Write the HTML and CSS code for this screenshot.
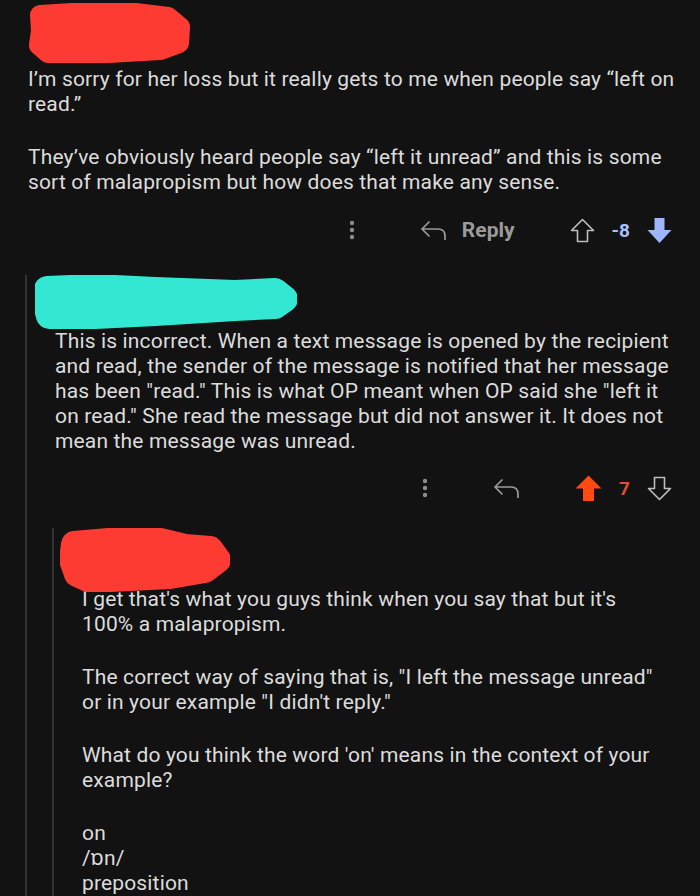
FILE: index.html
```html
<!doctype html>
<html lang="en">
<head>
    <meta charset="UTF-8">
    <meta name="viewport" content="width=device-width, initial-scale=1.0">
    <link rel="stylesheet" href="styles.css">
    <title>Comments</title>
</head>
<body>
<main class="thread">
    <article class="comment">
        <svg class="blob blob-op" width="162" height="60" viewBox="0 0 162 60" aria-hidden="true">
            <polygon points="12,12 60,9 100,9 140,14 152,24 151,40 132,47 80,50 20,50 11,42 13,28"/>
        </svg>
        <div class="body">
            <p>I’m sorry for her loss but it really gets to me when people say “left on read.”</p>
            <p>They’ve obviously heard people say “left it unread” and this is some sort of malapropism but how does that make any sense.</p>
        </div>
        <div class="actions">
            <button class="more" aria-label="More">
                <svg width="6" height="20" viewBox="0 0 6 20"><circle cx="3" cy="3" r="2.2"/><circle cx="3" cy="10" r="2.2"/><circle cx="3" cy="17" r="2.2"/></svg>
            </button>
            <button class="reply">
                <svg width="27" height="20" viewBox="0 0 27 20"><path d="M9 2 L2 9 L9 16 M2 9 H18 Q25 9 25 16 V20"/></svg>
                <span>Reply</span>
            </button>
            <div class="vote">
                <svg class="arrow" width="25" height="25" viewBox="0 0 25 25"><path d="M12.5 1.5 L23.5 12.5 H17.5 V23.5 H7.5 V12.5 H1.5 Z"/></svg>
                <span class="score down-voted">-8</span>
                <svg class="arrow filled-blue" width="25" height="27" viewBox="0 0 25 27"><path d="M7.5 1 H17.5 V13 H24.5 L12.5 26 L0.5 13 H7.5 Z"/></svg>
            </div>
        </div>

        <div class="replies">
            <article class="comment">
                <svg class="blob blob-teal" width="262" height="55" viewBox="0 0 262 55" aria-hidden="true">
                    <polygon points="12,14 60,12 120,15 200,18 240,16 250,24 240,31 200,33 120,38 60,41 14,41 10,26"/>
                </svg>
                <div class="body">
                    <p>This is incorrect. When a text message is opened by the recipient and read, the sender of the message is notified that her message has been "read." This is what OP meant when OP said she "left it on read." She read the message but did not answer it. It does not mean the message was unread.</p>
                </div>
                <div class="actions">
                    <button class="more" aria-label="More">
                        <svg width="6" height="20" viewBox="0 0 6 20"><circle cx="3" cy="3" r="2.2"/><circle cx="3" cy="10" r="2.2"/><circle cx="3" cy="17" r="2.2"/></svg>
                    </button>
                    <button class="reply" aria-label="Reply">
                        <svg width="27" height="20" viewBox="0 0 27 20"><path d="M9 2 L2 9 L9 16 M2 9 H18 Q25 9 25 16 V20"/></svg>
                    </button>
                    <div class="vote">
                        <svg class="arrow filled-orange" width="27" height="27" viewBox="0 0 27 27"><path d="M13.5 0.5 L26.5 13.5 H19 V26 H8 V13.5 H0.5 Z"/></svg>
                        <span class="score up-voted">7</span>
                        <svg class="arrow" width="25" height="25" viewBox="0 0 25 25"><path d="M7.5 1.5 H17.5 V12.5 H23.5 L12.5 23.5 L1.5 12.5 H7.5 Z"/></svg>
                    </div>
                </div>

                <div class="replies">
                    <article class="comment">
                        <svg class="blob blob-red" width="170" height="64" viewBox="0 0 170 64" aria-hidden="true">
                            <polygon points="14,16 60,12 100,13 125,19 150,21 158,32 145,42 110,48 70,50 30,52 17,46 12,32"/>
                        </svg>
                        <div class="body narrow">
                            <p>I get that's what you guys think when you say that but it's 100% a malapropism.</p>
                            <p>The correct way of saying that is, "I left the message unread" or in your example "I didn't reply."</p>
                            <p>What do you think the word 'on' means in the context of your example?</p>
                            <p>on<br>/ɒn/<br>preposition</p>
                        </div>
                    </article>
                </div>
            </article>
        </div>
    </article>
</main>
</body>
</html>
```

FILE: styles.css
```css
* {
    box-sizing: border-box;
}

html {
    height: 100%;
    background: #121212;
}

body {
    margin: 0;
    min-height: 100%;
    overflow: hidden;
    background: #121212;
    color: #dcdcdc;
    font-family: Roboto, 'Noto Sans', sans-serif;
    font-size: 21px;
    letter-spacing: 0.15px;
    line-height: 25px;
}

.thread {
    padding: 3px 22px 0 25px;
}

.comment > .body,
.comment > .actions {
    margin-left: 3px;
}

.body.narrow {
    padding-right: 18px;
}

.body p {
    margin: 0 0 28px;
}

.body p:last-child {
    margin-bottom: 0;
}

/* redaction scribbles drawn over the user names */
.blob {
    display: block;
    position: relative;
    z-index: 1;
    stroke-linejoin: round;
}

.blob-op {
    fill: #fe3b33;
    stroke: #fe3b33;
    stroke-width: 20;
    margin: 0 0 4px 3px;
}

.blob-teal {
    fill: #33e8d3;
    stroke: #33e8d3;
    stroke-width: 26;
    margin: -2px 0 -1px -17px;
}

.blob-red {
    fill: #fe3b33;
    stroke: #fe3b33;
    stroke-width: 26;
    margin: -8px 0 -5px -19px;
}

.actions {
    display: flex;
    justify-content: flex-end;
    align-items: center;
    height: 36px;
    margin-top: 17px;
    padding-right: 6px;
    letter-spacing: 0;
}

.replies .actions {
    margin-top: 16px;
}

button {
    display: flex;
    align-items: center;
    padding: 0;
    border: 0;
    background: none;
    font: inherit;
    color: inherit;
}

.more {
    margin-right: 65px;
    fill: #8c8c8c;
}

.reply {
    gap: 15px;
    margin-right: 55px;
    color: #9b9b9b;
    font-size: 21px;
    font-weight: 700;
}

.reply svg {
    fill: none;
    stroke: #9b9b9b;
    stroke-width: 1.7;
    stroke-linecap: round;
    stroke-linejoin: round;
}

.vote {
    display: flex;
    align-items: center;
    gap: 17px;
}

.arrow {
    display: block;
    fill: none;
    stroke: #bdbdbd;
    stroke-width: 1.6;
    stroke-linejoin: round;
}

.arrow.filled-blue {
    fill: #9db7ff;
    stroke: none;
}

.arrow.filled-orange {
    fill: #ff4a12;
    stroke: none;
}

.score {
    font-size: 19px;
    font-weight: 700;
}

.down-voted {
    color: #a9c0ff;
}

.up-voted {
    color: #e64b33;
}

.replies {
    margin-top: 29px;
    padding-left: 25px;
    border-left: 2px solid #333;
}

.replies .replies {
    margin-top: 30px;
}
```
